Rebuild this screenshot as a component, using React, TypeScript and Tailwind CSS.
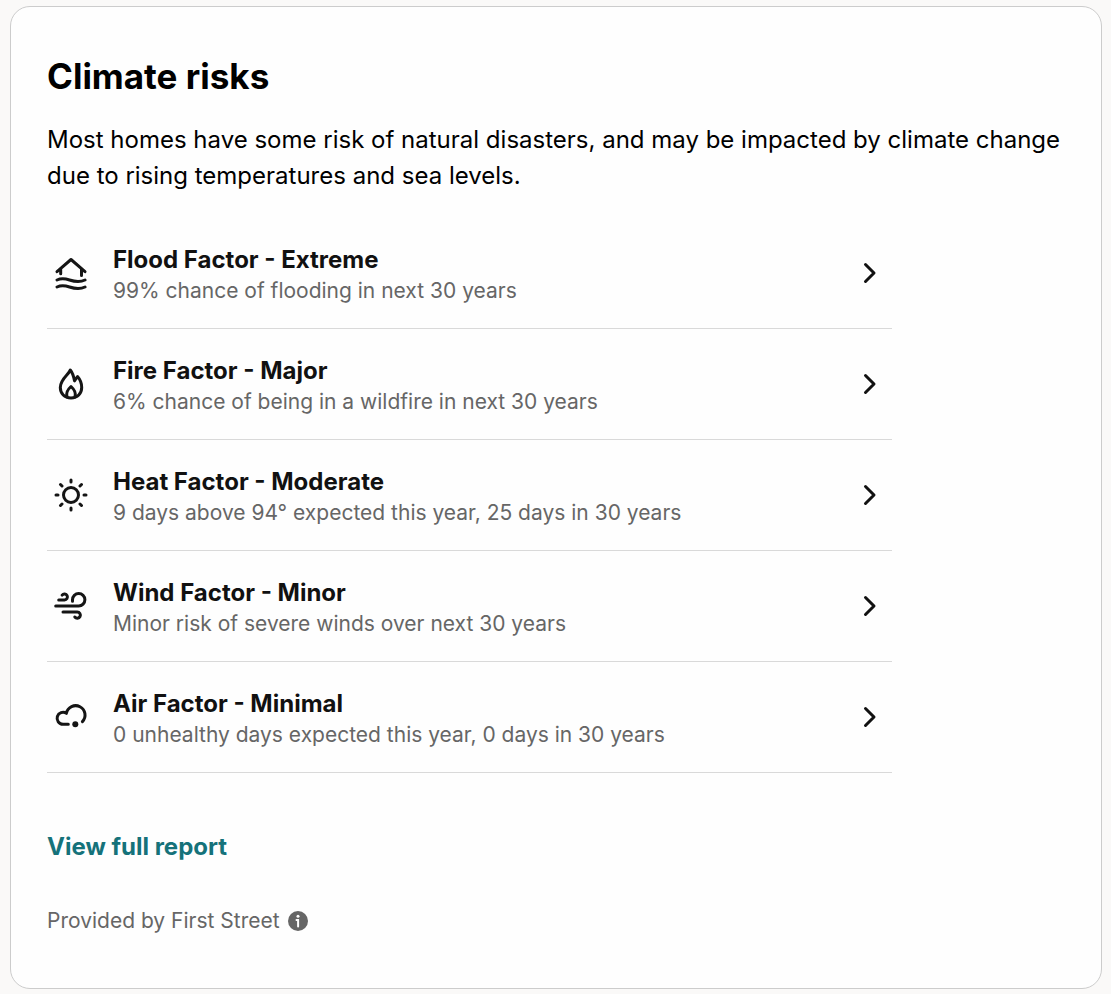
import type { ReactNode } from 'react';

interface Risk {
  title: string;
  detail: string;
  icon: ReactNode;
}

const risks: Risk[] = [
  {
    title: 'Flood Factor - Extreme',
    detail: '99% chance of flooding in next 30 years',
    icon: (
      <>
        <path d="M4 16.7 18 4.5l14 12.200M7.700 14.500v4.200M28.500 14.500v6" />
        <path d="M4 25c4.500-2 7.800-1.500 12.500 0s10 2.600 15.500 0M4 32c4.500-2 7.800-1.500 12.500 0s10 2.600 15.500 0" />
      </>
    ),
  },
  {
    title: 'Fire Factor - Major',
    detail: '6% chance of being in a wildfire in next 30 years',
    icon: (
      <>
        <path d="M17.300 4C16 8.500 7.300 13 7.300 21.500 7.300 27.500 11.500 32 18 32s10.700-4.500 10.700-10.500c0-4.500-1.500-8-4.200-11l-3 4.300C20.800 11 19.800 7 17.300 4Z" />
        <path d="M14 31c-1.200-4 .6-7.500 4-10.500 3.400 3 5.200 6.500 4 10.500" />
      </>
    ),
  },
  {
    title: 'Heat Factor - Moderate',
    detail: '9 days above 94° expected this year, 25 days in 30 years',
    icon: (
      <>
        <circle cx="18" cy="18" r="7.500" />
        <path d="M18 3V5M18 31v2M3 18h2M31 18h2M7.500 7.500l1.500 1.500M27 27l1.500 1.500M7.500 28.500l1.500-1.500M27 9l1.500-1.500" />
      </>
    ),
  },
  {
    title: 'Wind Factor - Minor',
    detail: 'Minor risk of severe winds over next 30 years',
    icon: (
      <>
        <path d="M2.700 18h23a6.200 6.200 0 1 0-6.200-6.200v1.500" />
        <path d="M5.700 12H11.500a3 3 0 1 0-2.400-4.900" />
        <path d="M10 24h14.300a3.100 3.100 0 1 1-2.500 5" />
      </>
    ),
  },
  {
    title: 'Air Factor - Minimal',
    detail: '0 unhealthy days expected this year, 0 days in 30 years',
    icon: (
      <>
        <path d="M15.300 25.300H10a6 6 0 1 1 3.400-11 9.400 9.400 0 1 1 16 8.300" />
        <circle cx="22.300" cy="25.300" r="3" fill="currentColor" stroke="none" />
      </>
    ),
  },
];

function RiskRow({ title, detail, icon }: Risk) {
  return (
    <li className="border-b border-[#d9d9d9]">
      <button type="button" className="flex w-full items-center py-[22px] pl-1.5 pr-3 text-left">
        <svg
          viewBox="0 0 36 36"
          className="size-9 shrink-0 text-[#151515]"
          fill="none"
          stroke="currentColor"
          strokeWidth="3"
          strokeLinecap="round"
          strokeLinejoin="round"
          aria-hidden="true"
        >
          {icon}
        </svg>
        <span className="ml-6 flex-1 pt-1">
          <span className="block text-2xl leading-[31px] font-bold text-[#111111]">{title}</span>
          <span className="block text-[21px] leading-[31px] text-[#666666]">{detail}</span>
        </span>
        <svg
          viewBox="0 0 20 24"
          className="h-6 w-5 shrink-0 text-[#111111]"
          fill="none"
          stroke="currentColor"
          strokeWidth="3"
          strokeLinecap="round"
          strokeLinejoin="round"
          aria-hidden="true"
        >
          <path d="m5.500 3.500 8.500 8.500-8.500 8.500" />
        </svg>
      </button>
    </li>
  );
}

export default function App() {
  return (
    <main className="min-h-screen bg-[#faf9f8] pt-1.5 pr-[9px] pb-1 pl-2.5 font-['Inter',sans-serif]">
      <section className="rounded-[20px] border border-[#cccccc] bg-[#fefefe] px-9 pt-12 pb-[51px]">
        <h1 className="text-[35px] leading-[43px] font-bold text-black">Climate risks</h1>
        <p className="mt-6 text-2xl leading-9 text-black">
          Most homes have some risk of natural disasters, and may be impacted by climate change due to rising
          temperatures and sea levels.
        </p>

        <ul className="mt-6 max-w-[845px]">
          {risks.map((risk) => (
            <RiskRow key={risk.title} {...risk} />
          ))}
        </ul>

        <a href="#report" className="mt-14 inline-block text-2xl leading-9 font-bold text-[#15727a]">
          View full report
        </a>

        <div className="mt-10 flex items-center gap-2 text-[21px] leading-8 text-[#666666]">
          <span>Provided by First Street</span>
          <button type="button" aria-label="About First Street">
            <svg viewBox="0 0 20 20" className="size-5" aria-hidden="true">
              <circle cx="10" cy="10" r="10" fill="#666666" />
              <circle cx="10" cy="5.300" r="1.500" fill="#ffffff" />
              <path d="M8.500 9h1.600v6.500" fill="none" stroke="#ffffff" strokeWidth="2" strokeLinecap="round" />
            </svg>
          </button>
        </div>
      </section>
    </main>
  );
}
